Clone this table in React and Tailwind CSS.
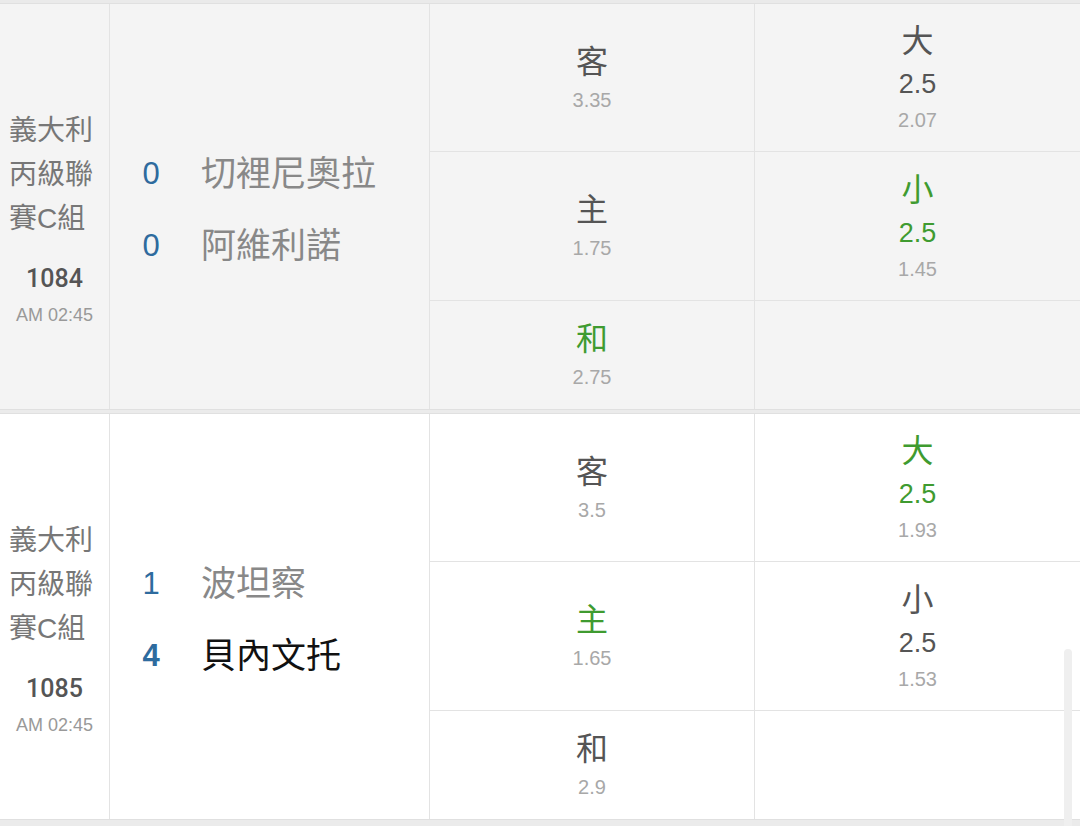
import React from 'react';

const font = { fontFamily: '"Liberation Sans", "Noto Sans CJK TC", sans-serif' };

const matches = [
    {
        bg: 'bg-[#f4f4f4]',
        league: ['義大利', '丙級聯', '賽C組'],
        no: '1084',
        time: 'AM 02:45',
        teams: [
            { score: '0', name: '切裡尼奧拉', win: false },
            { score: '0', name: '阿維利諾', win: false },
        ],
        win1x2: [
            { label: '客', odds: '3.35', hit: false },
            { label: '主', odds: '1.75', hit: false },
            { label: '和', odds: '2.75', hit: true },
        ],
        ou: [
            { label: '大', line: '2.5', odds: '2.07', hit: false },
            { label: '小', line: '2.5', odds: '1.45', hit: true },
        ],
    },
    {
        bg: 'bg-white',
        league: ['義大利', '丙級聯', '賽C組'],
        no: '1085',
        time: 'AM 02:45',
        teams: [
            { score: '1', name: '波坦察', win: false },
            { score: '4', name: '貝內文托', win: true },
        ],
        win1x2: [
            { label: '客', odds: '3.5', hit: false },
            { label: '主', odds: '1.65', hit: true },
            { label: '和', odds: '2.9', hit: false },
        ],
        ou: [
            { label: '大', line: '2.5', odds: '1.93', hit: true },
            { label: '小', line: '2.5', odds: '1.53', hit: false },
        ],
    },
];

const cellH = ['h-[148px]', 'h-[149px]', 'flex-1'];

const OddsCell = ({ item, idx, last }) => (
    <div className={`${cellH[idx]} flex flex-col items-center justify-center ${last ? '' : 'border-b border-[#e3e3e3]'}`}>
        {item && (
            <>
                <div className={`text-[32px] leading-[45px] ${item.hit ? 'text-[#3f9b30]' : 'text-[#555]'}`}>{item.label}</div>
                {item.line && (
                    <div className={`text-[27px] leading-[41px] ${item.hit ? 'text-[#3f9b30]' : 'text-[#555]'}`}>{item.line}</div>
                )}
                <div className="text-[20px] leading-[31px] text-[#a8a8a8]">{item.odds}</div>
            </>
        )}
    </div>
);

const MatchRow = ({ m }) => (
    <div className={`flex h-[405px] ${m.bg}`}>
        <div className="w-[110px] border-r border-[#e3e3e3] flex flex-col justify-center pt-[29px]">
            <div className="pl-[9px] text-[28px] leading-[44px] text-[#777]">
                {m.league.map((l) => (
                    <div key={l} className="whitespace-nowrap">{l}</div>
                ))}
            </div>
            <div className="mt-[20px] text-center text-[25px] leading-[36px] font-medium text-[#555] font-['Roboto',sans-serif]">{m.no}</div>
            <div className="text-center text-[18px] leading-[36px] text-[#999]">{m.time}</div>
        </div>

        <div className="w-[320px] border-r border-[#e3e3e3] flex flex-col justify-center pl-[10px] pt-[7px]">
            {m.teams.map((t, i) => (
                <div key={i} className="h-[72px] flex items-center">
                    <span className={`w-[62px] text-center text-[31px] text-[#2e6b9e] ${t.win ? 'font-bold' : ''}`}>{t.score}</span>
                    <span className={`ml-[19px] text-[35px] whitespace-nowrap ${t.win ? 'text-[#111]' : 'text-[#888]'}`}>{t.name}</span>
                </div>
            ))}
        </div>

        <div className="w-[325px] border-r border-[#e3e3e3] flex flex-col">
            {m.win1x2.map((o, i) => (
                <OddsCell key={i} item={o} idx={i} last={i === 2} />
            ))}
        </div>

        <div className="flex-1 flex flex-col">
            {[0, 1, 2].map((i) => (
                <OddsCell key={i} item={m.ou[i]} idx={i} last={i === 2} />
            ))}
        </div>
    </div>
);

export default function App() {
    return (
        <div className="relative w-[1080px] h-[826px] overflow-hidden bg-white" style={font}>
            <div className="h-[4px] bg-[#eaeaea] border-b border-[#e0e0e0]" />
            <MatchRow m={matches[0]} />
            <div className="h-[5px] bg-[#ebebeb] border-y border-[#e0e0e0]" />
            <MatchRow m={matches[1]} />
            <div className="h-[8px] bg-[#ebebeb] border-t border-[#e0e0e0]" />
            {/* scroll indicator */}
            <div className="absolute right-[8px] top-[649px] w-[8px] h-[190px] rounded-full bg-[#efefef]" />
        </div>
    );
}
